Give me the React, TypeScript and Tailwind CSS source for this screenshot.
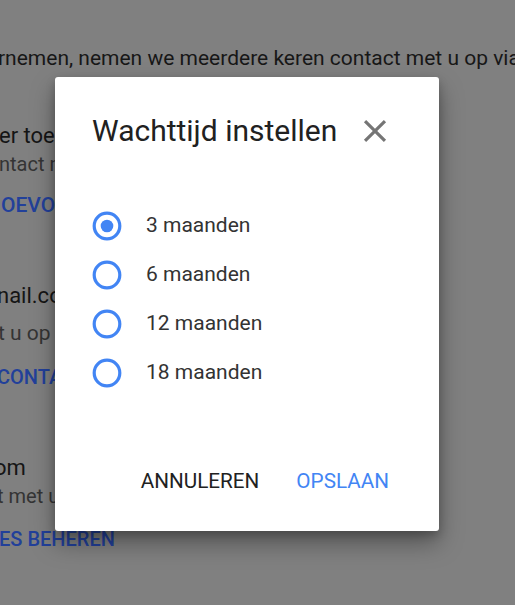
import React from "react";

const Radio = ({ checked }: { checked?: boolean }) => (
  <svg width="30" height="30" viewBox="0 0 30 30" className="shrink-0">
    <circle cx="15" cy="15" r="12.8" fill="none" stroke="#4285f4" strokeWidth="3.2" />
    {checked && <circle cx="15" cy="15" r="6.3" fill="#4285f4" />}
  </svg>
);

export default function App() {
  const options = ["3 maanden", "6 maanden", "12 maanden", "18 maanden"];
  return (
    <div className="relative w-[515px] h-[605px] overflow-hidden bg-[#808080] font-['Roboto',sans-serif]">
      {/* page behind the overlay */}
      <div className="pt-[46px] whitespace-nowrap leading-6">
        <p className="-ml-[2px] text-[21px] text-[#171717]">
          rnemen, nemen we meerdere keren contact met u op via e-mail of telefoon
        </p>

        <p className="mt-[54px] -ml-[1px] text-[22px] text-[#151515]">er toevoegen</p>
        <p className="mt-[4px] -ml-[1px] text-[20px] text-[#343434]">ntact met u op</p>
        <p className="mt-[17px] ml-[1px] text-[21px] font-medium text-[#22409a]">OEVOEGEN</p>

        <p className="mt-[67px] -ml-[3px] text-[22px] text-[#151515]">nail.com</p>
        <p className="mt-[13px] -ml-[2px] text-[21px] text-[#343434]">t u op via</p>
        <p className="mt-[20px] -ml-[3px] text-[20px] font-medium text-[#22409a]">CONTACTGEGEVENS</p>

        <p className="mt-[67px] -ml-[6px] text-[22px] text-[#151515]">om</p>
        <p className="mt-[4px] -ml-[3px] text-[20px] text-[#343434]">t met u op</p>
        <p className="mt-[19px] -ml-[1px] text-[20px] font-medium text-[#22409a]">ES BEHEREN</p>
      </div>

      {/* dialog */}
      <div className="absolute left-[55px] top-[77px] w-[384px] h-[454px] rounded-[3px] bg-white shadow-[0_12px_24px_rgba(0,0,0,0.35),0_4px_10px_rgba(0,0,0,0.2)] flex flex-col pl-[37px] pr-[40px] pt-[30px]">
        <div className="flex items-center justify-between h-12">
          <h2 className="text-[30px] leading-none font-normal text-[#212121]">Wachttijd instellen</h2>
          <button className="w-12 h-12 flex items-center justify-center">
            <svg width="38" height="38" viewBox="0 0 24 24">
              <path
                fill="#757575"
                d="M19 6.41L17.59 5 12 10.59 6.41 5 5 6.41 10.59 12 5 17.59 6.41 19 12 13.41 17.59 19 19 17.59 13.41 12z"
              />
            </svg>
          </button>
        </div>

        <div className="mt-[46px] flex flex-col">
          {options.map((o, i) => (
            <label key={o} className="flex items-center h-[49px] gap-[24px]">
              <Radio checked={i === 0} />
              <span className="text-[21px] text-[#333333]">{o}</span>
            </label>
          ))}
        </div>

        <div className="mt-[61px] flex justify-end items-center h-12 gap-[37px] pr-[10px]">
          <button className="text-[20.7px] text-[#212121]">ANNULEREN</button>
          <button className="text-[20.7px] text-[#4285f4]">OPSLAAN</button>
        </div>
      </div>
    </div>
  );
}
